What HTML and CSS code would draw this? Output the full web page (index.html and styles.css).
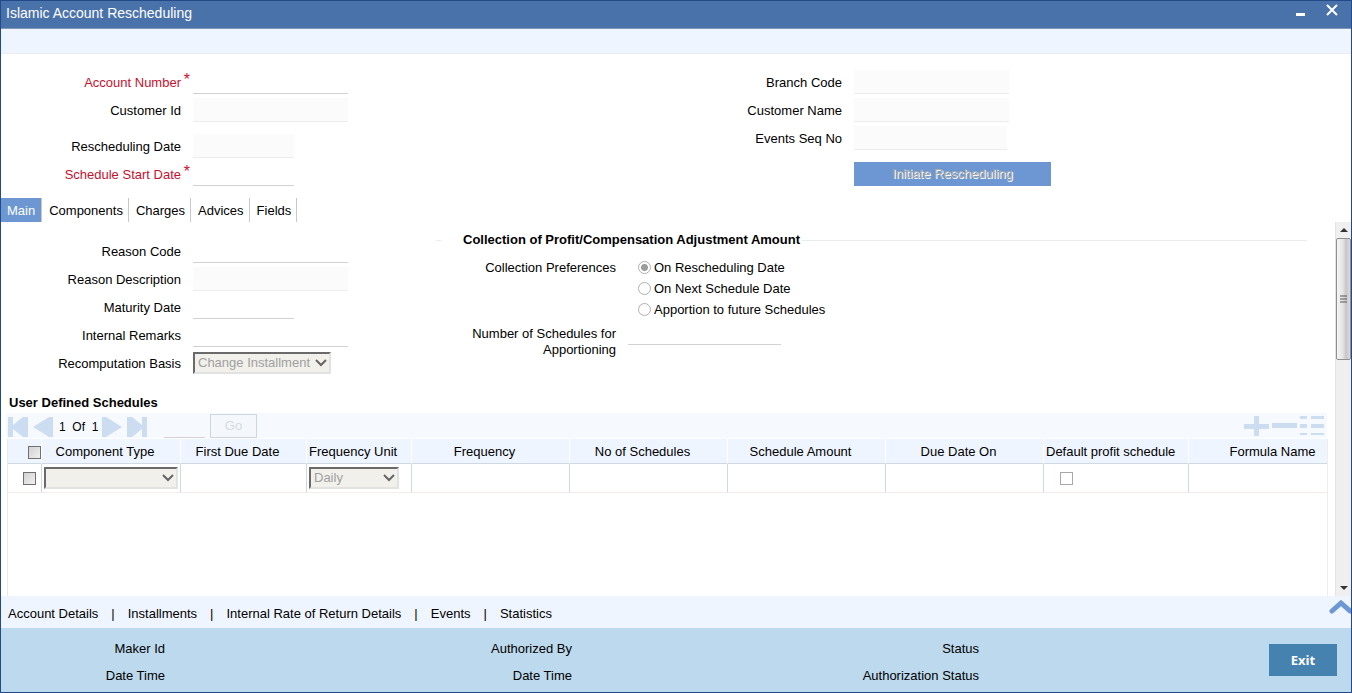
FILE: index.html
```
<!DOCTYPE html>
<html lang="en">
<head>
  <meta charset="UTF-8">
  <meta name="viewport" content="width=device-width, initial-scale=1.0">
  <title>Islamic Account Rescheduling</title>
  <link rel="stylesheet" href="styles.css">
</head>
<body>
  <div class="window">
    <header class="titlebar">
      <h1>Islamic Account Rescheduling</h1>
      <div class="window-buttons">
        <button type="button" aria-label="Minimize">
          <svg width="12" height="12" viewBox="0 0 12 12"><path d="M1 9h9v3H1z" fill="#fff"/></svg>
        </button>
        <button type="button" aria-label="Close">
          <svg width="12" height="12" viewBox="0 0 12 12"><path d="M1 1l10 10M11 1L1 11" stroke="#fff" stroke-width="2" fill="none"/></svg>
        </button>
      </div>
    </header>
    <div class="toolbar"></div>

    <!-- account details -->
    <div class="account">
      <div class="fields">
        <div class="field required">
          <label for="account-number">Account Number</label>
          <input type="text" id="account-number" required>
        </div>
        <div class="field">
          <label for="customer-id">Customer Id</label>
          <input type="text" id="customer-id" readonly>
        </div>
        <div class="field spaced">
          <label for="rescheduling-date">Rescheduling Date</label>
          <input type="text" class="date" id="rescheduling-date" readonly>
        </div>
        <div class="field required">
          <label for="start-date">Schedule Start Date</label>
          <input type="text" class="date" id="start-date" required>
        </div>
      </div>
      <div class="fields">
        <div class="field">
          <label for="branch-code">Branch Code</label>
          <input type="text" id="branch-code" readonly>
        </div>
        <div class="field">
          <label for="customer-name">Customer Name</label>
          <input type="text" id="customer-name" readonly>
        </div>
        <div class="field">
          <label for="events-seq">Events Seq No</label>
          <input type="text" class="number" id="events-seq" readonly>
        </div>
        <button type="button" class="initiate" disabled>Initiate Rescheduling</button>
      </div>
    </div>

    <nav class="tabs">
      <button type="button" class="active">Main</button>
      <button type="button">Components</button>
      <button type="button">Charges</button>
      <button type="button">Advices</button>
      <button type="button">Fields</button>
    </nav>

    <main class="scroll-area">
      <div class="content">
        <div class="main-tab">
          <div class="fields">
            <div class="field">
              <label for="reason-code">Reason Code</label>
              <input type="text" id="reason-code">
            </div>
            <div class="field">
              <label for="reason-desc">Reason Description</label>
              <input type="text" id="reason-desc" readonly>
            </div>
            <div class="field">
              <label for="maturity-date">Maturity Date</label>
              <input type="text" class="date" id="maturity-date">
            </div>
            <div class="field">
              <label for="remarks">Internal Remarks</label>
              <input type="text" id="remarks">
            </div>
            <div class="field">
              <label for="basis">Recomputation Basis</label>
              <span class="select basis">
                <select id="basis" disabled><option>Change Installment</option></select>
                <svg width="14" height="10" viewBox="0 0 14 10"><path d="M2 2l5 5 5-5" fill="none" stroke="#666" stroke-width="2"/></svg>
              </span>
            </div>
          </div>

          <section class="collection">
            <h2>Collection of Profit/Compensation Adjustment Amount</h2>
            <div class="preferences" role="radiogroup" aria-labelledby="pref-label">
              <span class="label" id="pref-label">Collection Preferences</span>
              <div class="options">
                <label><input type="radio" name="preference" checked disabled>On Rescheduling Date</label>
                <label><input type="radio" name="preference" disabled>On Next Schedule Date</label>
                <label><input type="radio" name="preference" disabled>Apportion to future Schedules</label>
              </div>
            </div>
            <div class="apportion">
              <label for="schedule-count">Number of Schedules for Apportioning</label>
              <input type="text" class="number" id="schedule-count">
            </div>
          </section>
        </div>

        <h2 class="grid-title">User Defined Schedules</h2>
        <div class="pager">
          <button type="button" aria-label="First page"><svg width="20" height="20" viewBox="0 0 20 20"><path d="M0 0h5v8L15 0h5v20h-5L5 12v8H0z"/></svg></button>
          <button type="button" aria-label="Previous page"><svg width="20" height="20" viewBox="0 0 20 20"><path d="M20 0v20h-4L0 10 16 0z"/></svg></button>
          <span class="pages">1&nbsp; Of&nbsp; 1</span>
          <button type="button" aria-label="Next page"><svg width="20" height="20" viewBox="0 0 20 20"><path d="M0 0v20h4l16-10L4 0z"/></svg></button>
          <button type="button" aria-label="Last page"><svg width="20" height="20" viewBox="0 0 20 20"><path d="M20 0h-5v8L5 0H0v20h5l10-8v8h5z"/></svg></button>
          <input type="text" class="page-no" aria-label="Page number">
          <button type="button" class="go" disabled>Go</button>
          <div class="row-buttons">
            <button type="button" aria-label="Add row"><svg width="25" height="20" viewBox="0 0 25 20"><path d="M10 0h5v8h10v5H15v7h-5v-7H0V8h10z"/></svg></button>
            <button type="button" aria-label="Delete row"><svg width="25" height="20" viewBox="0 0 25 20"><path d="M0 7h25v5H0z"/></svg></button>
            <button type="button" aria-label="Single record view"><svg width="25" height="20" viewBox="0 0 25 20"><path d="M0 0h7v3H0zM11 0h13v3H11zM0 8h7v4H0zM11 8h13v4H11zM0 17h7v2H0zM11 17h13v2H11z"/></svg></button>
          </div>
        </div>

        <div class="grid">
          <table>
            <colgroup>
              <col class="c-check"><col class="c-type"><col class="c-due"><col class="c-unit">
              <col class="c-wide"><col class="c-wide"><col class="c-wide"><col class="c-wide">
              <col class="c-profit"><col>
            </colgroup>
            <thead>
              <tr>
                <th><input type="checkbox" class="pick" aria-label="Select all rows" disabled></th>
                <th class="type">Component Type</th>
                <th class="due">First Due Date</th>
                <th class="unit">Frequency Unit</th>
                <th class="pull">Frequency</th>
                <th class="pull">No of Schedules</th>
                <th class="pull">Schedule Amount</th>
                <th class="pull">Due Date On</th>
                <th class="profit">Default profit schedule</th>
                <th>Formula Name</th>
              </tr>
            </thead>
            <tbody>
              <tr>
                <td class="check"><input type="checkbox" class="pick" aria-label="Select row" disabled></td>
                <td>
                  <span class="select component">
                    <select aria-label="Component Type" disabled><option></option></select>
                    <svg width="14" height="10" viewBox="0 0 14 10"><path d="M2 2l5 5 5-5" fill="none" stroke="#666" stroke-width="2"/></svg>
                  </span>
                </td>
                <td></td>
                <td>
                  <span class="select unit">
                    <select aria-label="Frequency Unit" disabled><option>Daily</option></select>
                    <svg width="14" height="10" viewBox="0 0 14 10"><path d="M2 2l5 5 5-5" fill="none" stroke="#666" stroke-width="2"/></svg>
                  </span>
                </td>
                <td></td>
                <td></td>
                <td></td>
                <td></td>
                <td class="flag"><input type="checkbox" aria-label="Default profit schedule"></td>
                <td></td>
              </tr>
            </tbody>
          </table>
        </div>
      </div>

      <div class="scrollbar">
        <svg width="15" height="16" viewBox="0 0 15 16"><path d="M4 10l4-4 4 4z" fill="#333"/></svg>
        <div class="thumb">
          <svg width="7" height="9" viewBox="0 0 7 9"><path d="M0 1h7M0 4h7M0 7h7" stroke="#555"/></svg>
        </div>
        <svg class="down" width="15" height="16" viewBox="0 0 15 16"><path d="M4 6h8l-4 4z" fill="#333"/></svg>
      </div>
    </main>

    <nav class="links">
      <a href="#">Account Details</a><span>|</span>
      <a href="#">Installments</a><span>|</span>
      <a href="#">Internal Rate of Return Details</a><span>|</span>
      <a href="#">Events</a><span>|</span>
      <a href="#">Statistics</a>
      <button type="button" aria-label="Expand">
        <svg width="22" height="16" viewBox="0 0 22 16"><path d="M3 12l9-8 9 8" fill="none" stroke="#6c97d2" stroke-width="5" stroke-linecap="round"/></svg>
      </button>
    </nav>

    <footer class="audit">
      <div class="audit-col"><span>Maker Id</span><span>Date Time</span></div>
      <div class="audit-col"><span>Authorized By</span><span>Date Time</span></div>
      <div class="audit-col"><span>Status</span><span>Authorization Status</span></div>
      <button type="button" class="exit">Exit</button>
    </footer>
  </div>
</body>
</html>
```
FILE: styles.css
```
* {
  box-sizing: border-box;
}

body {
  margin: 0;
  font-family: "Liberation Sans", Arial, sans-serif;
  font-size: 13px;
  line-height: 16px;
  color: #000;
  background: #fff;
}

button,
input,
select {
  font: inherit;
  color: inherit;
  margin: 0;
}

button {
  padding: 0;
  border: none;
  background: none;
}

svg {
  display: block;
}

.window {
  display: flex;
  flex-direction: column;
  min-height: 100vh;
  border: 1px solid #234a88;
}

.titlebar {
  display: flex;
  justify-content: space-between;
  height: 28px;
  padding: 0 13px 0 5px;
  background: #4a72aa;
  border-bottom: 1px solid #7f97b5;
}

.titlebar h1 {
  margin: 0;
  font-size: 14px;
  line-height: 24px;
  font-weight: normal;
  color: #fff;
}

.window-buttons {
  display: flex;
  align-items: flex-start;
  gap: 19px;
  padding-top: 3px;
}

.toolbar {
  height: 25px;
  background: #eff5ff;
  border-bottom: 1px solid #ebebeb;
}

/* label + input rows */
.account {
  display: grid;
  grid-template-columns: 661fr 689fr;
  padding: 16px 0 12px;
}

.fields {
  display: flex;
  flex-direction: column;
  gap: 4px;
}

.field {
  display: grid;
  grid-template-columns: 180px auto;
  column-gap: 12px;
  justify-content: start;
  align-items: center;
  height: 24px;
}

.field.spaced {
  margin-top: 8px;
}

.field label {
  position: relative;
  padding-top: 2px;
  text-align: right;
}

.field.required label {
  color: #c8102e;
}

.field.required label::after {
  content: "*";
  position: absolute;
  top: -1px;
  right: -9px;
  font-size: 16px;
}

input[type="text"] {
  width: 155px;
  height: 24px;
  padding: 0 4px;
  border: none;
  border-bottom: 1px solid #d2d2d2;
  border-radius: 0;
  background: #fff;
}

input[type="text"][readonly] {
  background: #fbfbfb;
  border-bottom-color: #ececec;
}

input[type="text"].date {
  width: 101px;
}

input[type="text"].number {
  width: 153px;
}

.initiate {
  width: 197px;
  height: 24px;
  margin: 8px 0 0 192px;
  background: #6c97d2;
  color: #aaa;
  text-shadow: 1px 1px 0 #fff;
}

.tabs {
  display: flex;
  height: 24px;
}

.tabs button {
  padding: 2px 5px 0 7px;
  border-right: 1px solid #c8c8c8;
}

.tabs .active {
  padding: 2px 6px 0;
  background: #6c97d2;
  color: #fff;
}

.scroll-area {
  flex: 1;
  display: flex;
}

.content {
  flex: 1;
  min-width: 0;
  display: flex;
  flex-direction: column;
}

.main-tab {
  display: grid;
  grid-template-columns: 435px 1fr;
  padding: 17px 28px 0 0;
}

h2 {
  display: flex;
  align-items: center;
  margin: 0;
  font-size: 13px;
  line-height: 16px;
}

.collection h2 {
  height: 16px;
  margin-top: -7px;
}

.collection h2::before,
.collection h2::after {
  content: "";
  height: 1px;
  background: #ebebeb;
}

.collection h2::before {
  width: 5px;
  margin-right: 22px;
}

.collection h2::after {
  flex: 1;
  margin-left: 2px;
}

.preferences,
.apportion {
  display: grid;
  grid-template-columns: 180px auto;
  justify-content: start;
  text-align: right;
}

.preferences {
  column-gap: 22px;
  margin-top: 9px;
  line-height: 21px;
}

.options label {
  display: flex;
  align-items: center;
  gap: 3px;
}

.options input {
  appearance: none;
  width: 13px;
  height: 13px;
  border: 1px solid #b0b0b0;
  border-radius: 50%;
  background: #fff;
}

.options input:checked {
  background: radial-gradient(circle, #9c9c9c 3px, #fff 4px);
}

.apportion {
  column-gap: 12px;
  margin-top: 5px;
}

.apportion label {
  padding: 1px 0 0 30px;
}

.apportion input[type="text"] {
  height: 20px;
}

/* drop-downs */
.select {
  position: relative;
  display: block;
}

.select select {
  display: block;
  width: 100%;
  height: 22px;
  padding: 0 3px;
  appearance: none;
  border: 2px solid;
  border-color: #6a6a6a #e2e2e2 #e2e2e2 #6a6a6a;
  border-radius: 0;
  background: #f1f0ea;
  color: #a0a0a0;
  opacity: 1;
}

.select svg {
  position: absolute;
  top: 6px;
  right: 3px;
}

.basis {
  width: 138px;
}

.component {
  width: 134px;
}

.select.unit {
  width: 90px;
}

.grid-title {
  margin: 20px 0 2px 8px;
}

.pager {
  display: flex;
  align-items: center;
  height: 25px;
  margin: 0 8px 0 5px;
  padding: 0 2px;
  gap: 5px;
  background: #f6f9fe;
}

.pager svg {
  fill: #ccdcf1;
}

.pager > button:not(.go) {
  padding-top: 3px;
}

.pages {
  width: 38px;
  margin: 3px 0 0 1px;
  font-size: 12px;
  white-space: nowrap;
}

.pager .page-no {
  width: 41px;
  margin-left: 12px;
  background: transparent;
}

.go {
  width: 47px;
  height: 24px;
  border: 1px solid #cdd5dd;
  background: #f4f8fc;
  color: #d6dade;
}

.row-buttons {
  display: flex;
  gap: 3px;
  margin-left: auto;
}

.grid {
  flex: 1;
  margin: 1px 7px 0 6px;
  overflow: hidden;
  border-left: 1px solid #e6eaf0;
  border-right: 1px solid #ededed;
}

/* the last column runs out under the right edge */
table {
  width: calc(100% + 30px);
  table-layout: fixed;
  border-collapse: separate;
  border-spacing: 0;
}

.c-check { width: 34px; }
.c-type { width: 139px; }
.c-due { width: 126px; }
.c-unit { width: 105px; }
.c-wide { width: 158px; }
.c-profit { width: 145px; }

th {
  height: 25px;
  padding: 2px 0 0;
  font-weight: normal;
  text-align: center;
  white-space: nowrap;
  background: #eff5ff;
  border-right: 1px solid #fff;
  border-bottom: 1px solid #cfd9e6;
}

th.type,
th.pull {
  padding-right: 12px;
}

th.due {
  padding-right: 12px;
}

th.unit,
th.profit {
  padding-left: 2px;
  text-align: left;
}

td {
  height: 29px;
  padding: 0 2px;
  border-right: 1px solid #cfd9e6;
  border-bottom: 1px solid #f8ece8;
}

td.check {
  padding-right: 5px;
  text-align: right;
}

td.flag {
  padding-left: 16px;
}

input[type="checkbox"] {
  appearance: none;
  display: block;
  width: 13px;
  height: 13px;
  border: 1px solid #a8a8a8;
  border-radius: 0;
  background: #fff;
}

input[type="checkbox"].pick {
  margin-left: auto;
  border-color: #707070;
  background: linear-gradient(135deg, #d2d2d2, #f0f0f0);
}

.scrollbar {
  display: flex;
  flex-direction: column;
  width: 16px;
  background: #efefef;
  border-left: 1px solid #e4e4e4;
}

.thumb {
  display: flex;
  align-items: center;
  justify-content: center;
  height: 122px;
  border: 1px solid #8f8f8f;
  border-radius: 2px;
  background: linear-gradient(to right, #f5f5f5, #e4e4e6 45%, #c6c6ca 70%, #dcdcdc);
}

.scrollbar .down {
  margin-top: auto;
}

.links {
  display: flex;
  align-items: center;
  gap: 13px;
  height: 32px;
  padding: 3px 0 0 7px;
  background: #eff5ff;
}

.links a {
  color: #000;
  text-decoration: none;
}

.links button {
  align-self: flex-start;
  margin-left: auto;
}

.audit {
  display: grid;
  grid-template-columns: 407fr 407fr 407fr 129fr;
  align-items: center;
  height: 64px;
  background: #bcd9ed;
}

.audit-col {
  display: flex;
  flex-direction: column;
  gap: 11px;
  width: 164px;
  padding-top: 4px;
  text-align: right;
}

.exit {
  justify-self: end;
  width: 68px;
  height: 32px;
  margin-right: 14px;
  background: #4682b0;
  color: #fff;
  font-family: "Open Sans", sans-serif;
  font-weight: 700;
}
```
